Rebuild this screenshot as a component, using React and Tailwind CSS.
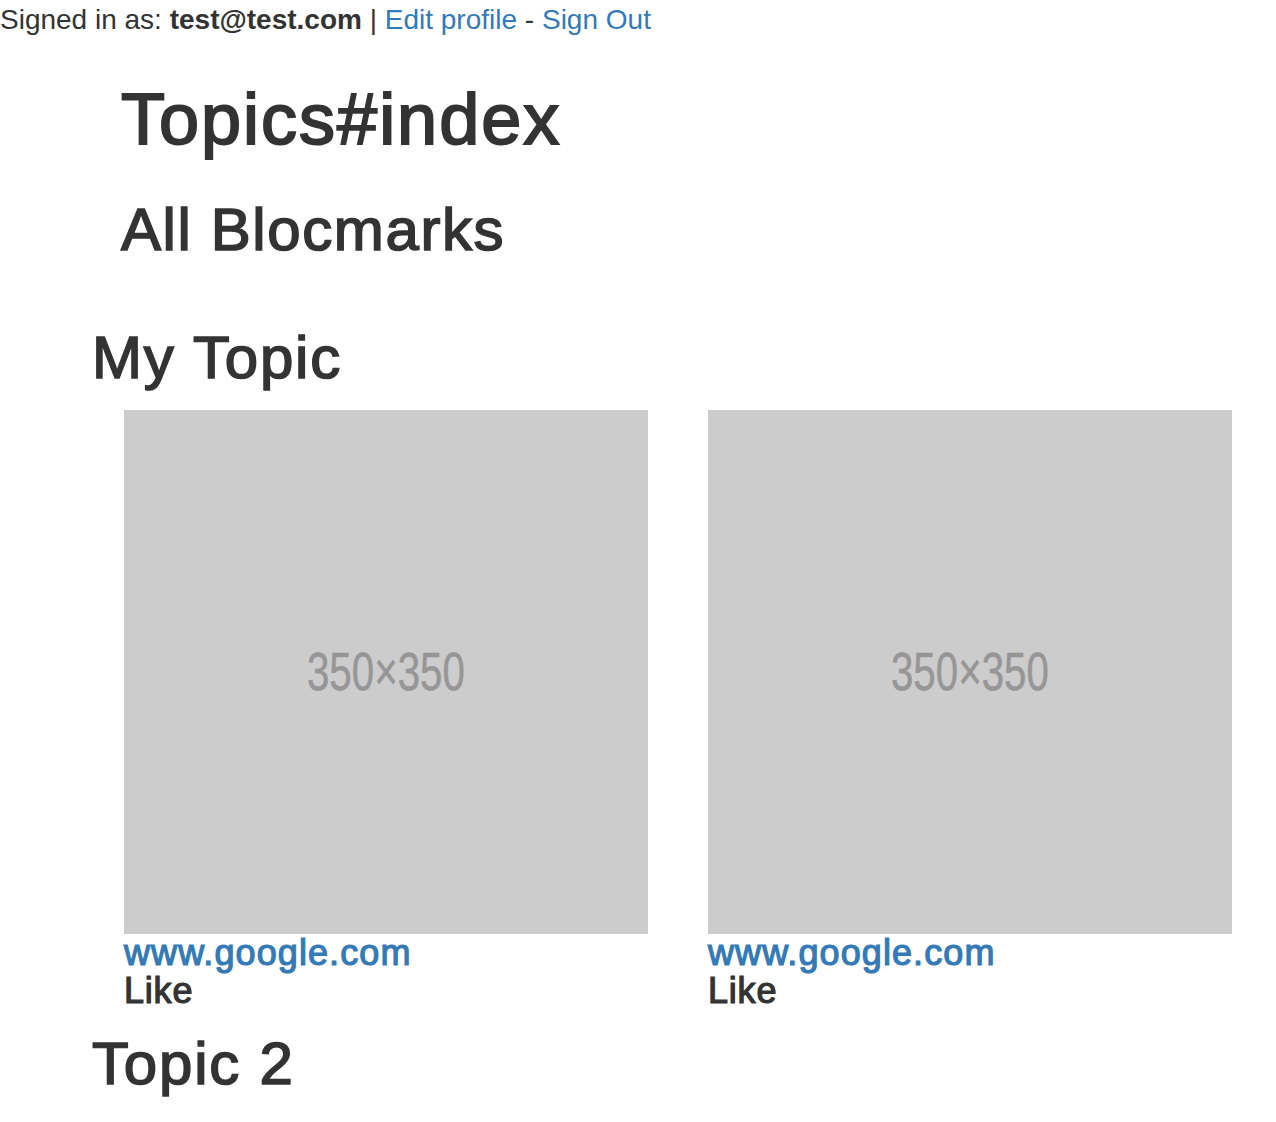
import React from 'react';

const bookmarks = [
  { id: 1, url: 'www.google.com' },
  { id: 2, url: 'www.google.com' }
];

function Placeholder() {
  return (
    <div className="w-[524px] h-[524px] bg-[#cccccc] flex items-center justify-center">
      <span className="inline-block scale-x-[0.76] text-[53px] text-[#969696] font-['Liberation_Sans',Arial,sans-serif] [-webkit-text-stroke:0.5px_#969696]">
        350×350
      </span>
    </div>
  );
}

function App() {
  return (
    <div className="min-h-[1122px] bg-white text-[#333333] font-['Liberation_Sans',Arial,sans-serif]">
      {/* Header */}
      <div className="h-[40px] leading-[40px] text-[28px] whitespace-nowrap">
        Signed in as: <strong className="font-bold">test@test.com</strong> |{' '}
        <a href="#" className="text-[#337ab7]">Edit profile</a> -{' '}
        <a href="#" className="text-[#337ab7]">Sign Out</a>
      </div>

      <div className="pl-[121px]">
        <h1 className="mt-[40px] text-[72px] leading-[79px] tracking-[2px] [-webkit-text-stroke:2px_#333333]">
          Topics#index
        </h1>
        <h2 className="mt-[38px] text-[60px] leading-[66px] tracking-[1.6px] [-webkit-text-stroke:1.6px_#333333]">
          All Blocmarks
        </h2>
      </div>

      {/* Topics */}
      <div className="pl-[92px] mt-[62px]">
        <h2 className="text-[60px] leading-[66px] tracking-[1.8px] [-webkit-text-stroke:1.6px_#333333]">
          My Topic
        </h2>
        <div className="mt-[19px] pl-[32px] flex gap-[60px]">
          {bookmarks.map(b => (
            <div key={b.id} className="w-[524px]">
              <Placeholder />
              <a
                href="#"
                className="block text-[36px] leading-[38px] tracking-[1.1px] text-[#337ab7] [-webkit-text-stroke:1.2px_#337ab7]"
              >
                {b.url}
              </a>
              <div className="text-[36px] leading-[37px] tracking-[0.8px] [-webkit-text-stroke:1.2px_#333333]">
                Like
              </div>
            </div>
          ))}
        </div>
        <h2 className="mt-[22px] text-[60px] leading-[66px] tracking-[1.8px] [-webkit-text-stroke:1.6px_#333333]">
          Topic 2
        </h2>
      </div>
    </div>
  );
}

export default App;
